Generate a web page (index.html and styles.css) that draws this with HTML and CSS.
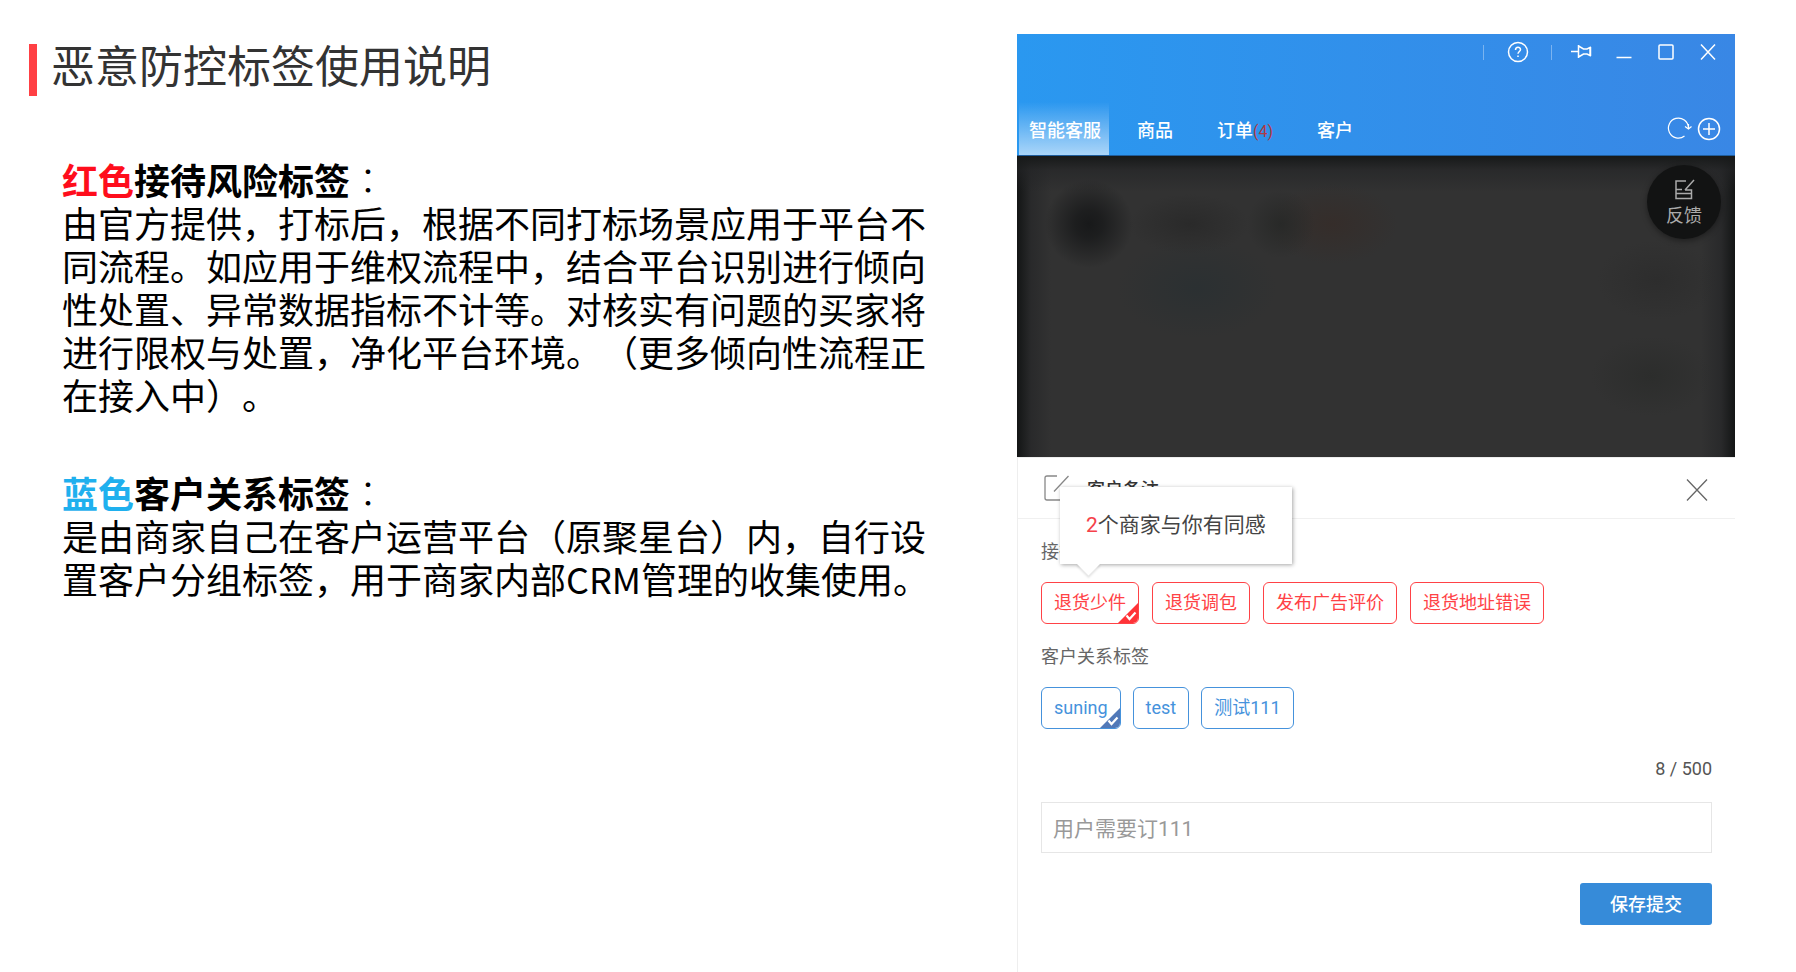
FILE: index.html
```html
<!DOCTYPE html>
<html lang="zh-CN">
<head>
    <meta charset="UTF-8">
    <meta name="viewport" content="width=device-width, initial-scale=1.0">
    <title>恶意防控标签使用说明</title>
    <link rel="stylesheet" href="styles.css">
</head>
<body>
    <main class="page">
        <article class="guide">
            <h1 class="guide-title">恶意防控标签使用说明</h1>
            <section class="guide-section">
                <h2><span class="red">红色</span>接待风险标签<span class="colon" lang="zh-TW">：</span></h2>
                <p>由官方提供，打标后，根据不同打标场景应用于平台不同流程。如应用于维权流程中，结合平台识别进行倾向性处置、异常数据指标不计等。对核实有问题的买家将进行限权与处置，净化平台环境。（更多倾向性流程正在接入中）。</p>
            </section>
            <section class="guide-section">
                <h2><span class="blue">蓝色</span>客户关系标签<span class="colon" lang="zh-TW">：</span></h2>
                <p>是由商家自己在客户运营平台（原聚星台）内，自行设置客户分组标签，用于商家内部CRM管理的收集使用。</p>
            </section>
        </article>

        <section class="window">
            <header class="window-header">
                <div class="window-controls">
                    <span class="separator"></span>
                    <button class="help-btn" aria-label="帮助">
                        <svg width="22" height="22" viewBox="0 0 22 22"><circle cx="11" cy="11" r="9.5"/><path d="M8.5 9c0-3.6 5-3.4 5-.5 0 2-2.5 2-2.5 4.3M11 14.4v1.6"/></svg>
                    </button>
                    <span class="separator"></span>
                    <div class="control-group">
                        <button aria-label="置顶">
                            <svg width="22" height="22" viewBox="0 0 22 22"><path d="M0 10.500h7M7.500 4v13M7.500 5l5 3h3.500l3-1.500v8l-3-1.500h-3.500l-5 3M19.500 6v9"/></svg>
                        </button>
                        <button aria-label="最小化">
                            <svg width="22" height="22" viewBox="0 0 22 22"><path d="M3.500 16.500h15"/></svg>
                        </button>
                        <button aria-label="最大化">
                            <svg width="22" height="22" viewBox="0 0 22 22"><rect x="4" y="4" width="14" height="14" rx="1"/></svg>
                        </button>
                        <button aria-label="关闭">
                            <svg width="22" height="22" viewBox="0 0 22 22"><path d="M4 3.500l14 15M18 3.500l-14 15"/></svg>
                        </button>
                    </div>
                </div>
                <div class="window-nav">
                    <nav class="tabs">
                        <a class="tab active" href="#">智能客服</a>
                        <a class="tab" href="#">商品</a>
                        <a class="tab" href="#">订单<span class="count">(4)</span></a>
                        <a class="tab" href="#">客户</a>
                    </nav>
                    <div class="nav-tools">
                        <button aria-label="刷新">
                            <svg class="thin" width="26" height="24" viewBox="0 0 26 24"><path d="M18.500 19A10 10 0 1 1 22.400 10.500M19 9.500l3.500 2.500 3-2.500M22.500 7v5"/></svg>
                        </button>
                        <button aria-label="添加">
                            <svg width="24" height="24" viewBox="0 0 24 24"><circle cx="12" cy="12" r="10.500"/><path d="M12 6v12M6 12h12"/></svg>
                        </button>
                    </div>
                </div>
            </header>

            <div class="backdrop">
                <button class="feedback">
                    <svg width="22" height="22" viewBox="0 0 22 22"><path d="M13 2H3v17.500h15.500v-8.500H12M3 14.500h15.500M3 10.500h6M21 1L12 11"/></svg>
                    反馈
                </button>
            </div>

            <div class="panel">
                <div class="panel-header">
                    <svg class="edit-icon" width="26" height="26" viewBox="0 0 26 26"><path d="M13 1H3Q1 1 1 3v20q0 2 2 2h19q2 0 2-2V14M24.500 1L10 16.500"/></svg>
                    <h3>客户备注</h3>
                    <button class="close-btn" aria-label="关闭">
                        <svg width="24" height="24" viewBox="0 0 24 24"><path d="M2 1.500l20 21M22 1.500l-20 21"/></svg>
                    </button>
                </div>
                <form class="panel-body">
                    <div class="tag-label">接待风险标签</div>
                    <div class="tags risk">
                        <div class="tag-wrap">
                            <button type="button" class="tag" aria-pressed="true">退货少件
                                <svg class="corner" width="20" height="20" viewBox="0 0 20 20"><path class="corner-bg" d="M20 0v20H0z"/><path class="corner-tick" d="M8.500 12.500l3 3.500 6-6.500"/></svg>
                            </button>
                            <div class="tooltip" role="tooltip"><span>2</span>个商家与你有同感</div>
                        </div>
                        <button type="button" class="tag">退货调包</button>
                        <button type="button" class="tag">发布广告评价</button>
                        <button type="button" class="tag">退货地址错误</button>
                    </div>
                    <div class="tag-label">客户关系标签</div>
                    <div class="tags relation">
                        <button type="button" class="tag" aria-pressed="true">suning
                            <svg class="corner" width="20" height="20" viewBox="0 0 20 20"><path class="corner-bg" d="M20 0v20H0z"/><path class="corner-tick" d="M8.500 12.500l3 3.500 6-6.500"/></svg>
                        </button>
                        <button type="button" class="tag">test</button>
                        <button type="button" class="tag">测试111</button>
                    </div>
                    <label class="note-count" for="note">8 / 500</label>
                    <input class="note" id="note" type="text" maxlength="500" value="用户需要订111">
                    <button type="submit" class="save-btn">保存提交</button>
                </form>
            </div>
        </section>
    </main>
</body>
</html>
```
FILE: styles.css
```css
* {
    box-sizing: border-box;
}

body {
    margin: 0;
    background-color: white;
    color: #000;
    font-family: Roboto, "Noto Sans CJK SC", sans-serif;
    font-size: 18px;
}

h1, h2, h3, p {
    margin: 0;
    font-weight: normal;
}

button {
    font: inherit;
    color: inherit;
    background: none;
    border: none;
    padding: 0;
    cursor: pointer;
}

svg {
    display: block;
    fill: none;
    stroke: currentColor;
    stroke-width: 1.5;
}

.page {
    display: grid;
    grid-template-columns: 1017fr 718fr;
    min-height: 100vh;
    padding: 34px 61px 0 0;
}

/* Left side text */
.guide {
    padding: 10px 80px 0 29px;
    font-family: "Noto Sans CJK SC", sans-serif;
    text-spacing-trim: space-all;
}

.guide-title {
    display: flex;
    align-items: center;
    height: 52px;
    margin-bottom: 62px;
    padding: 0 0 12px 14px;
    border-left: 8px solid #ff4044;
    color: #333;
    font-size: 44px;
    line-height: 52px;
}

.guide-section {
    margin: 0 0 55px 33px;
    font-size: 36px;
    line-height: 43px;
}

.guide-section h2 {
    font-size: 36px;
    font-weight: bold;
}

.guide-section .colon {
    font-family: "Noto Sans CJK TC", sans-serif;
    font-weight: 300;
}

.red {
    color: #ff0d1c;
}

.blue {
    color: #1fb0ee;
}

/* Chat window */
.window {
    display: flex;
    flex-direction: column;
}

.window-header {
    display: flex;
    flex-direction: column;
    justify-content: space-between;
    height: 122px;
    color: white;
    background: linear-gradient(to right, #2a98f0, #3987e5);
    border-bottom: 1px solid #1f5d9c;
}

.window-controls {
    display: flex;
    justify-content: flex-end;
    align-items: center;
    height: 36px;
    padding-right: 6px;
}

.separator {
    width: 1px;
    height: 15px;
    background-color: rgba(255, 255, 255, 0.35);
}

.help-btn {
    display: flex;
    justify-content: center;
    width: 67px;
}

.control-group {
    display: flex;
    margin-left: 9px;
}

.control-group button {
    display: flex;
    justify-content: center;
    width: 42px;
}

.window-nav {
    display: flex;
    justify-content: space-between;
    align-items: flex-end;
}

.tabs {
    display: flex;
    padding-left: 2px;
}

.tab {
    height: 53px;
    padding: 0 22px;
    color: white;
    font-weight: 500;
    line-height: 58px;
    text-decoration: none;
}

.tab.active {
    padding: 0 8px 0 10px;
    margin-right: 6px;
    background: linear-gradient(to bottom, rgba(255, 255, 255, 0), rgba(255, 255, 255, 0.6));
}

.count {
    color: #b03a44;
    font-size: 16px;
    font-weight: normal;
}

.nav-tools {
    display: flex;
    align-items: center;
    gap: 5px;
    height: 53px;
    padding-right: 14px;
}

.thin {
    stroke-width: 1.2;
}

/* Dimmed conversation behind the note panel */
.backdrop {
    position: relative;
    height: 301px;
    background:
        linear-gradient(to bottom, #171919, rgba(35, 36, 38, 0.6) 14px, rgba(35, 36, 38, 0) 36px),
        linear-gradient(to right, #131515, rgba(35, 36, 38, 0.6) 14px, rgba(35, 36, 38, 0) 34px),
        linear-gradient(to left, #131515, rgba(35, 36, 38, 0.6) 14px, rgba(35, 36, 38, 0) 34px),
        radial-gradient(circle at 72px 68px, #18191a 0, rgba(24, 25, 26, 0.8) 14px, rgba(24, 25, 26, 0) 44px),
        radial-gradient(ellipse 60px 30px at 172px 68px, #2a2a2a 0, rgba(42, 42, 42, 0) 100%),
        radial-gradient(circle at 264px 68px, #282928 0, rgba(40, 41, 40, 0) 34px),
        radial-gradient(ellipse 66px 40px at 315px 68px, #352d2a 0, rgba(53, 45, 42, 0) 100%),
        radial-gradient(ellipse 80px 50px at 180px 132px, #2b3032 0, rgba(43, 48, 50, 0) 100%),
        radial-gradient(ellipse 60px 40px at 640px 124px, #2d2d2d 0, rgba(45, 45, 45, 0) 100%),
        radial-gradient(ellipse 60px 40px at 634px 220px, #2c2d2c 0, rgba(44, 45, 44, 0) 100%),
        #323232;
}

.feedback {
    position: absolute;
    top: 9px;
    right: 14px;
    width: 74px;
    height: 74px;
    display: flex;
    flex-direction: column;
    align-items: center;
    padding-top: 14px;
    border-radius: 50%;
    background-color: #121313;
    color: #aaa;
    line-height: 30px;
    box-shadow: 0 2px 6px rgba(0, 0, 0, 0.4);
}

/* Customer note panel */
.panel {
    flex: 1;
    border-left: 1px solid #eee;
    border-top: 1px solid #eee;
    background-color: #fff;
}

.panel-header {
    display: flex;
    align-items: center;
    height: 61px;
    padding: 0 26px;
    border-bottom: 1px solid #f0f0f0;
    color: #333;
}

.panel-header h3 {
    margin-left: 17px;
    font-size: 18px;
    font-weight: 500;
}

.panel-header svg {
    stroke: #888;
    stroke-width: 1.3;
}

.close-btn {
    margin-left: auto;
    padding-top: 4px;
}

.panel-header .close-btn svg {
    stroke: #666;
}

.panel-body {
    display: flex;
    flex-direction: column;
    padding: 20px 23px;
}

.tag-label {
    color: #666;
    line-height: 26px;
}

.tags {
    display: flex;
    flex-wrap: wrap;
    gap: 12px;
    margin: 17px 0 20px;
}

.tags.risk {
    gap: 13px;
}

.tags.relation {
    margin-bottom: 27px;
}

.tag-wrap {
    position: relative;
}

.tag {
    position: relative;
    height: 42px;
    padding: 0 12px;
    border: 1px solid;
    border-radius: 6px;
    overflow: hidden;
    line-height: 38px;
}

.risk .tag {
    color: #ff4246;
}

.relation .tag {
    color: #4592dc;
}

.corner {
    position: absolute;
    right: 0;
    bottom: 0;
}

.corner-bg {
    fill: #ff3338;
    stroke: none;
}

.relation .corner-bg {
    fill: #5179b8;
}

.corner-tick {
    stroke: white;
    stroke-width: 2.2;
}

.tooltip {
    position: absolute;
    left: 19px;
    bottom: 60px;
    padding: 0 26px;
    background-color: white;
    box-shadow: 1px 1px 4px rgba(0, 0, 0, 0.35);
    color: #444;
    font-size: 21px;
    line-height: 77px;
    white-space: nowrap;
}

.tooltip::after {
    content: "";
    position: absolute;
    left: 20px;
    bottom: -8px;
    width: 17px;
    height: 17px;
    background-color: white;
    box-shadow: 2px 2px 2px rgba(0, 0, 0, 0.1);
    transform: rotate(45deg);
}

.tooltip span {
    color: #f5414a;
}

.note-count {
    align-self: flex-end;
    color: #555;
    line-height: 26px;
}

.note {
    width: 100%;
    height: 51px;
    margin: 20px 0 30px;
    padding: 0 11px 2px;
    border: 1px solid #e6e6e6;
    color: #999;
    font: inherit;
    font-size: 21px;
}

.save-btn {
    align-self: flex-end;
    width: 132px;
    height: 42px;
    padding-bottom: 2px;
    border-radius: 3px;
    background-color: #368bd9;
    color: white;
    font-weight: 500;
}
```
